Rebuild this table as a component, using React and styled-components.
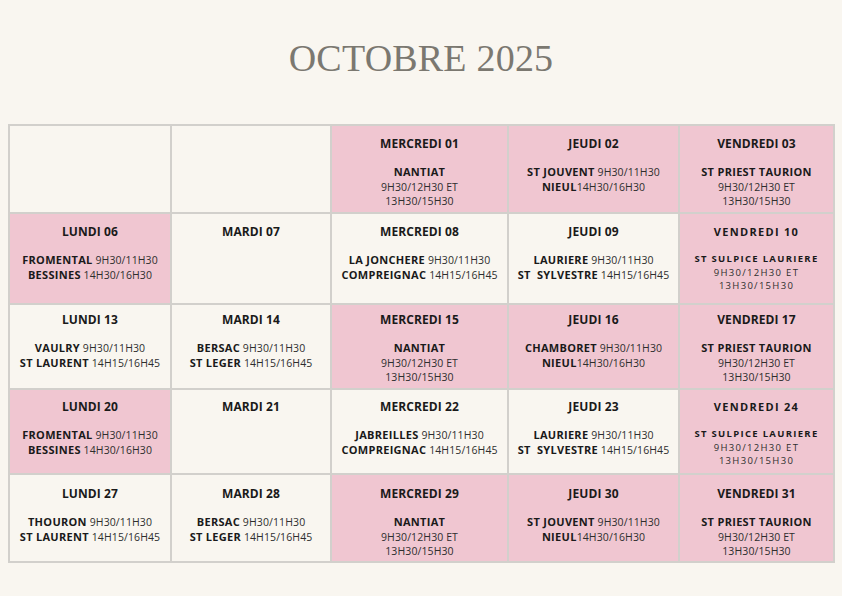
import React from 'react';
import styled, { createGlobalStyle } from 'styled-components';

const GlobalStyle = createGlobalStyle`
  html, body {
    margin: 0;
    padding: 0;
    background: #f9f6f0;
  }
  body {
    font-family: "Open Sans", "Liberation Sans", sans-serif;
    color: #1e1e1e;
  }
`;

const Page = styled.div`
  width: 842px;
  height: 596px;
  box-sizing: border-box;
  padding: 34px 8px 0 8px;
  background: #f9f6f0;
`;

const Title = styled.h1`
  margin: 0 0 42px 0;
  text-align: center;
  font-family: "Liberation Serif", "DejaVu Serif", serif;
  font-weight: normal;
  font-size: 38px;
  line-height: 48px;
  color: #7b7870;
  letter-spacing: 0.2px;
`;

const Grid = styled.div`
  display: grid;
  grid-template-columns: 160px 158px 175px 169px 153px;
  grid-template-rows: 86px 89px 83px 83px 86px;
  gap: 2px;
  padding: 2px;
  width: 827px;
  box-sizing: border-box;
  background: #d2d0cc;
`;

const Cell = styled.div`
  display: flex;
  flex-direction: column;
  align-items: center;
  padding-top: ${p => p.$top}px;
  background: ${p => (p.$pink ? '#f0c6d1' : '#f9f6f0')};
  text-align: center;
`;

const Day = styled.div`
  font-weight: 700;
  font-size: ${p => (p.$spaced ? '11px' : '12px')};
  letter-spacing: ${p => (p.$spaced ? '1.3px' : '0.1px')};
  line-height: 16px;
  color: #1a1a1a;
  margin-bottom: ${p => (p.$spaced ? '12px' : '13px')};
`;

const Line = styled.div`
  font-size: ${p => (p.$spaced ? '9.5px' : '10.5px')};
  letter-spacing: ${p => (p.$spaced ? '1.3px' : '0.1px')};
  line-height: ${p => (p.$spaced ? '13.5px' : '14.5px')};
  color: #2e2e2e;
  white-space: pre;
`;

const Name = styled.b`
  font-weight: 700;
  font-size: ${p => (p.$spaced ? '9.5px' : '11px')};
  letter-spacing: ${p => (p.$spaced ? '1.3px' : '0.3px')};
  color: #1a1a1a;
`;

const ln = (b, t = '') => ({ b, t });

const weeks = [
  {
    top: 10,
    days: [
      null,
      null,
      { day: 'MERCREDI 01', pink: true, lines: [ln('NANTIAT'), ln('', '9H30/12H30 ET'), ln('', '13H30/15H30')] },
      { day: 'JEUDI 02', pink: true, lines: [ln('ST JOUVENT', ' 9H30/11H30'), ln('NIEUL', '14H30/16H30')] },
      { day: 'VENDREDI 03', pink: true, lines: [ln('ST PRIEST TAURION'), ln('', '9H30/12H30 ET'), ln('', '13H30/15H30')] },
    ],
  },
  {
    top: 10,
    days: [
      { day: 'LUNDI 06', pink: true, lines: [ln('FROMENTAL', ' 9H30/11H30'), ln('BESSINES', ' 14H30/16H30')] },
      { day: 'MARDI 07', lines: [] },
      { day: 'MERCREDI 08', lines: [ln('LA JONCHERE', ' 9H30/11H30'), ln('COMPREIGNAC', ' 14H15/16H45')] },
      { day: 'JEUDI 09', lines: [ln('LAURIERE', ' 9H30/11H30'), ln('ST  SYLVESTRE', ' 14H15/16H45')] },
      { day: 'VENDREDI 10', pink: true, spaced: true, lines: [ln('ST SULPICE LAURIERE'), ln('', '9H30/12H30 ET'), ln('', '13H30/15H30')] },
    ],
  },
  {
    top: 7,
    days: [
      { day: 'LUNDI 13', lines: [ln('VAULRY', ' 9H30/11H30'), ln('ST LAURENT', ' 14H15/16H45')] },
      { day: 'MARDI 14', lines: [ln('BERSAC', ' 9H30/11H30'), ln('ST LEGER', ' 14H15/16H45')] },
      { day: 'MERCREDI 15', pink: true, lines: [ln('NANTIAT'), ln('', '9H30/12H30 ET'), ln('', '13H30/15H30')] },
      { day: 'JEUDI 16', pink: true, lines: [ln('CHAMBORET', ' 9H30/11H30'), ln('NIEUL', '14H30/16H30')] },
      { day: 'VENDREDI 17', pink: true, lines: [ln('ST PRIEST TAURION'), ln('', '9H30/12H30 ET'), ln('', '13H30/15H30')] },
    ],
  },
  {
    top: 9,
    days: [
      { day: 'LUNDI 20', pink: true, lines: [ln('FROMENTAL', ' 9H30/11H30'), ln('BESSINES', ' 14H30/16H30')] },
      { day: 'MARDI 21', lines: [] },
      { day: 'MERCREDI 22', lines: [ln('JABREILLES', ' 9H30/11H30'), ln('COMPREIGNAC', ' 14H15/16H45')] },
      { day: 'JEUDI 23', lines: [ln('LAURIERE', ' 9H30/11H30'), ln('ST  SYLVESTRE', ' 14H15/16H45')] },
      { day: 'VENDREDI 24', pink: true, spaced: true, lines: [ln('ST SULPICE LAURIERE'), ln('', '9H30/12H30 ET'), ln('', '13H30/15H30')] },
    ],
  },
  {
    top: 11,
    days: [
      { day: 'LUNDI 27', lines: [ln('THOURON', ' 9H30/11H30'), ln('ST LAURENT', ' 14H15/16H45')] },
      { day: 'MARDI 28', lines: [ln('BERSAC', ' 9H30/11H30'), ln('ST LEGER', ' 14H15/16H45')] },
      { day: 'MERCREDI 29', pink: true, lines: [ln('NANTIAT'), ln('', '9H30/12H30 ET'), ln('', '13H30/15H30')] },
      { day: 'JEUDI 30', pink: true, lines: [ln('ST JOUVENT', ' 9H30/11H30'), ln('NIEUL', '14H30/16H30')] },
      { day: 'VENDREDI 31', pink: true, lines: [ln('ST PRIEST TAURION'), ln('', '9H30/12H30 ET'), ln('', '13H30/15H30')] },
    ],
  },
];

export default function App() {
  return (
    <Page>
      <GlobalStyle />
      <Title>OCTOBRE 2025</Title>
      <Grid>
        {weeks.map((week, w) =>
          week.days.map((d, i) => (
            <Cell key={`${w}-${i}`} $top={week.top} $pink={d && d.pink}>
              {d && <Day $spaced={d.spaced}>{d.day}</Day>}
              {d && d.lines.map((l, k) => (
                <Line key={k} $spaced={d.spaced}>
                  {l.b && <Name $spaced={d.spaced}>{l.b}</Name>}
                  {l.t}
                </Line>
              ))}
            </Cell>
          )))}
      </Grid>
    </Page>
  );
}
